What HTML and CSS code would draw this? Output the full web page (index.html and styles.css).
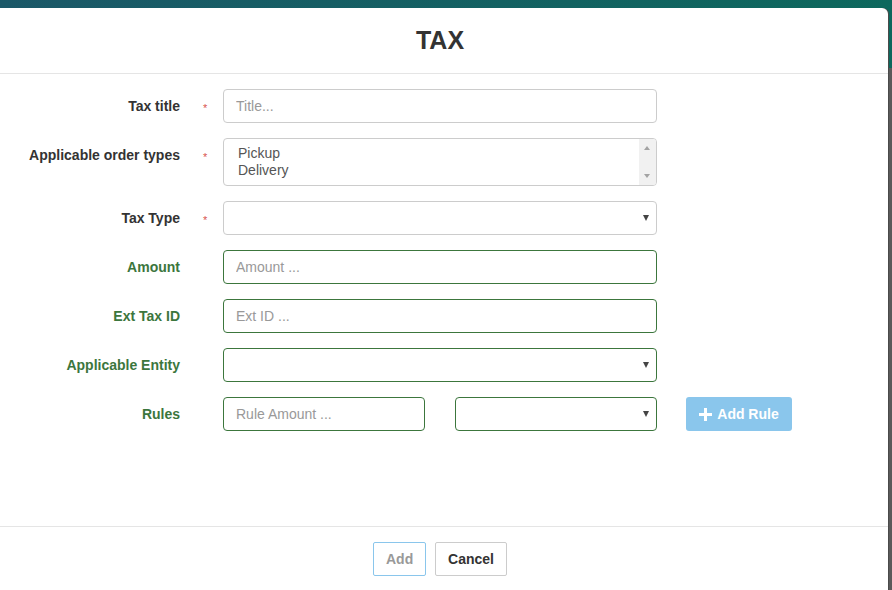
FILE: index.html
```html
<!DOCTYPE html>
<html lang="en">
<head>
  <meta charset="UTF-8" />
  <title>Tax</title>
  <link rel="stylesheet" href="styles.css">
</head>
<body>
  <div class="modal">
    <div class="modal-header">
      <h4 class="modal-title">TAX</h4>
    </div>

    <div class="modal-body">
      <div class="form-row">
        <label class="form-label">Tax title</label>
        <span class="required">*</span>
        <input type="text" class="form-input" placeholder="Title...">
      </div>

      <div class="form-row">
        <label class="form-label">Applicable order types</label>
        <span class="required">*</span>
        <div class="form-input multi-select">
          <div class="options">
            <div>Pickup</div>
            <div>Delivery</div>
          </div>
          <div class="scrollbar">
            <span class="arrow-up"></span>
            <span class="arrow-down"></span>
          </div>
        </div>
      </div>

      <div class="form-row">
        <label class="form-label">Tax Type</label>
        <span class="required">*</span>
        <div class="form-input select-box"><span class="caret"></span></div>
      </div>

      <div class="form-row success">
        <label class="form-label">Amount</label>
        <span class="required"></span>
        <input type="text" class="form-input" placeholder="Amount ...">
      </div>

      <div class="form-row success">
        <label class="form-label">Ext Tax ID</label>
        <span class="required"></span>
        <input type="text" class="form-input" placeholder="Ext ID ...">
      </div>

      <div class="form-row success">
        <label class="form-label">Applicable Entity</label>
        <span class="required"></span>
        <div class="form-input select-box"><span class="caret"></span></div>
      </div>

      <div class="form-row success">
        <label class="form-label">Rules</label>
        <span class="required"></span>
        <div class="rules">
          <input type="text" class="form-input small" placeholder="Rule Amount ...">
          <div class="form-input small select-box"><span class="caret"></span></div>
          <button class="btn-rule" type="button">
            <svg width="13" height="13" viewBox="0 0 13 13"><path d="M5 0h3v5h5v3H8v5H5V8H0V5h5z" fill="#fff"/></svg>
            Add Rule
          </button>
        </div>
      </div>
    </div>

    <div class="modal-footer">
      <button class="btn btn-add" type="button">Add</button>
      <button class="btn btn-cancel" type="button">Cancel</button>
    </div>
  </div>
</body>
</html>
```

FILE: styles.css
```css
html, body {
  margin: 0;
  height: 100%;
  overflow: hidden;
}

body {
  font-family: "Liberation Sans", Arial, sans-serif;
  font-size: 14px;
  color: #333;
  background:
    linear-gradient(to right, #1b5868, #0d685d) top / 100% 68px no-repeat,
    #5a5a5a;
}

.modal {
  width: 896px;
  margin: 8px 0 0 -8px;
  background: #fff;
  border-radius: 6px 6px 0 0;
  box-shadow: 1px 0 0 #4a4a4a;
}

.modal-header {
  height: 65px;
  border-bottom: 1px solid #e5e5e5;
  display: flex;
  align-items: center;
  justify-content: center;
}

.modal-title {
  margin: 0;
  font-size: 25px;
  font-weight: bold;
  color: #333;
}

.modal-body {
  height: 452px;
  box-sizing: border-box;
  padding: 15px;
}

.form-row {
  display: flex;
  align-items: flex-start;
  margin-bottom: 15px;
}

.form-label {
  width: 173px;
  text-align: right;
  font-weight: bold;
  line-height: 20px;
  padding-top: 7px;
}

.required {
  width: 43px;
  box-sizing: border-box;
  padding-left: 23px;
  padding-top: 9px;
  color: #d9534f;
  font-size: 11px;
  line-height: 20px;
}

.form-input {
  width: 434px;
  height: 34px;
  box-sizing: border-box;
  padding: 6px 12px;
  border: 1px solid #ccc;
  border-radius: 4px;
  font-family: inherit;
  font-size: 14px;
  color: #555;
  background: #fff;
  margin: 0;
}

.form-input::placeholder {
  color: #999;
}

.success .form-label {
  color: #3c763d;
}

.success .form-input {
  border-color: #3c763d;
}

.multi-select {
  height: 48px;
  padding: 0;
  display: flex;
  justify-content: space-between;
  overflow: hidden;
}

.options {
  padding: 6px 0 0 14px;
  line-height: 17px;
  color: #555;
}

.scrollbar {
  width: 17px;
  background: #f1f1f1;
  position: relative;
}

.arrow-up, .arrow-down {
  position: absolute;
  left: 5px;
  width: 0;
  height: 0;
  border-left: 3.5px solid transparent;
  border-right: 3.5px solid transparent;
}

.arrow-up {
  top: 7px;
  border-bottom: 4px solid #a3a3a3;
}

.arrow-down {
  bottom: 7px;
  border-top: 4px solid #a3a3a3;
}

.select-box {
  position: relative;
}

.caret {
  position: absolute;
  right: 7px;
  top: 13px;
  width: 0;
  height: 0;
  border-left: 3.5px solid transparent;
  border-right: 3.5px solid transparent;
  border-top: 6px solid #444;
}

.rules {
  display: flex;
  align-items: center;
}

.form-input.small {
  width: 202px;
  margin-right: 30px;
}

.rules .select-box.small {
  margin-right: 29px;
}

.btn-rule {
  width: 106px;
  height: 34px;
  border: none;
  border-radius: 3px;
  background: #8ac6ec;
  color: #fff;
  font-family: inherit;
  font-size: 14px;
  font-weight: bold;
  display: flex;
  align-items: center;
  justify-content: center;
  gap: 5px;
  padding: 0;
}

.modal-footer {
  border-top: 1px solid #e5e5e5;
  padding: 15px;
  display: flex;
  justify-content: center;
  gap: 9px;
}

.btn {
  height: 34px;
  background: #fff;
  border-radius: 2px;
  font-family: inherit;
  font-size: 14px;
  font-weight: bold;
  padding: 0 12px;
}

.btn-add {
  width: 53px;
  border: 1px solid #8ac6ec;
  color: #999;
}

.btn-cancel {
  width: 72px;
  border: 1px solid #ccc;
  color: #333;
}
```
